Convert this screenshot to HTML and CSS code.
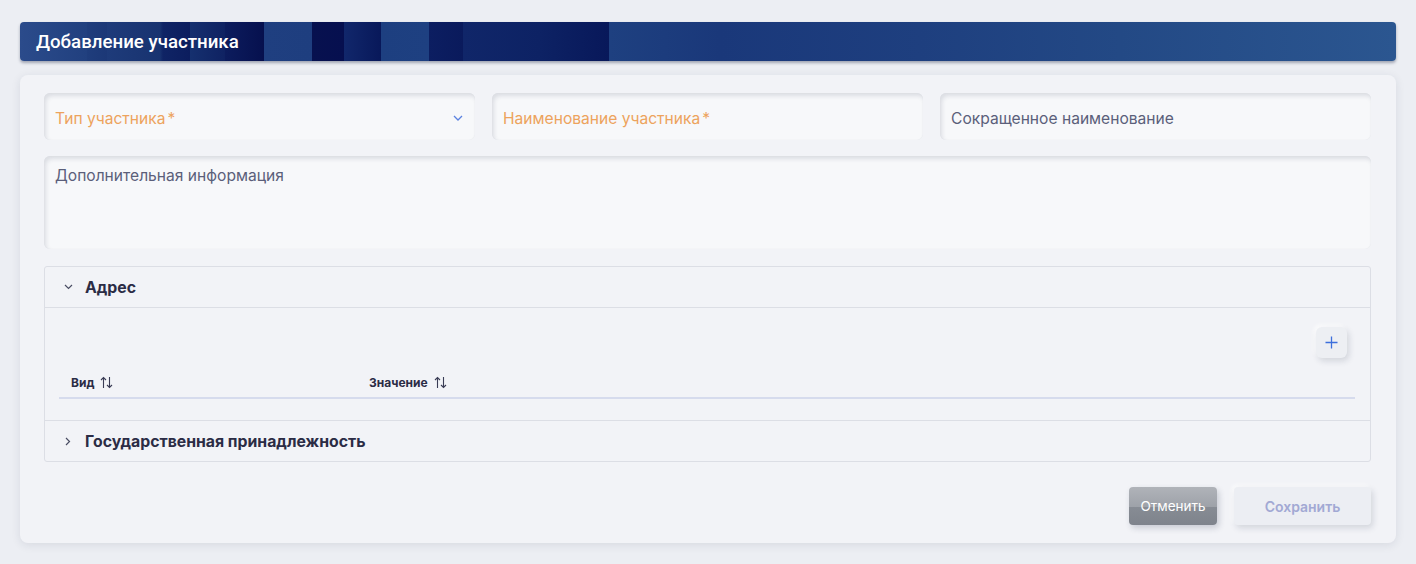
FILE: index.html
```html
<!DOCTYPE html>
<html lang="ru">
<head>
<meta charset="utf-8">
<link rel="stylesheet" href="styles.css">
</head>
<body>
<div class="page">
  <div class="titlebar"><h1>Добавление участника</h1></div>
  <div class="panel">
    <div class="row3">
      <div class="field select">
        <span class="ph req">Тип участника<span class="star">*</span></span>
        <svg class="dd" width="10" height="6" viewBox="0 0 10 6"><path d="M1 1l4 4 4-4" fill="none" stroke="#5b82e0" stroke-width="1.3"/></svg>
      </div>
      <div class="field"><span class="ph req">Наименование участника<span class="star">*</span></span></div>
      <div class="field"><span class="ph">Сокращенное наименование</span></div>
    </div>
    <div class="field area"><span class="ph">Дополнительная информация</span></div>
    <div class="accordion">
      <div class="acc-head">
        <span class="chev-box"><svg width="9" height="6" viewBox="0 0 9 6"><path d="M1 1l3.5 3.5L8 1" fill="none" stroke="#4a4d63" stroke-width="1.2"/></svg></span>
        <span>Адрес</span>
      </div>
      <div class="acc-body">
        <div class="toolbar">
          <button class="plus"><svg width="13" height="13" viewBox="0 0 13 13"><path d="M6.5 0.5v12M0.5 6.5h12" stroke="#3d6fdc" stroke-width="1.3"/></svg></button>
        </div>
        <div class="thead">
          <div class="th c1">Вид <svg class="sort" width="13" height="13" viewBox="0 0 13 13"><path d="M3.5 12V1.5M1 4l2.5-2.5L6 4M9.5 1v10.5M7 9l2.5 2.5L12 9" fill="none" stroke="#3a3c55" stroke-width="1.1"/></svg></div>
          <div class="th c2">Значение <svg class="sort" width="13" height="13" viewBox="0 0 13 13"><path d="M3.5 12V1.5M1 4l2.5-2.5L6 4M9.5 1v10.5M7 9l2.5 2.5L12 9" fill="none" stroke="#3a3c55" stroke-width="1.1"/></svg></div>
        </div>
      </div>
      <div class="acc-head last">
        <span class="chev-box"><svg width="6" height="9" viewBox="0 0 6 9"><path d="M1 1l3.5 3.5L1 8" fill="none" stroke="#4a4d63" stroke-width="1.2"/></svg></span>
        <span>Государственная принадлежность</span>
      </div>
    </div>
    <div class="actions">
      <button class="btn cancel">Отменить</button>
      <button class="btn save">Сохранить</button>
    </div>
  </div>
</div>
</body>
</html>
```

FILE: styles.css
```css
* { box-sizing: border-box; }
html, body { margin: 0; padding: 0; }
body {
  background: #eceef3;
  font-family: Inter, "Noto Sans", sans-serif;
  width: 1416px;
  height: 564px;
  overflow: hidden;
}
.page {
  padding: 22px 20px 0 20px;
}
.titlebar {
  height: 39px;
  border-radius: 4px;
  box-shadow: 0 2px 3px rgba(20, 30, 60, 0.35);
  background: linear-gradient(90deg,
    #2b4b8b 0px, #21407f 67px,
    #1f3d7c 67px, #1c3877 87px,
    #1e3b7a 87px, #183370 140px,
    #0f2465 143px, #0c1d5e 170px,
    #15306f 170px, #0f2262 205px,
    #0c1c5d 205px, #06104e 244px,
    #1f3f80 244px, #1e3e7f 292px,
    #07114f 292px, #060f4f 324px,
    #11276b 324px, #08185a 361px,
    #1d3f80 361px, #1e4081 409px,
    #0c1e61 409px, #0a1a5c 443px,
    #102669 443px, #0d2264 520px, #08185a 589px,
    #1e4080 589px, #1a387a 700px,
    #1e3f7f 900px, #234985 1100px, #2b5690 1376px);
  display: flex;
  align-items: center;
  padding-left: 16px;
}
.titlebar h1 {
  margin: 0;
  font-family: Roboto, "Liberation Sans", sans-serif;
  font-weight: 500;
  font-size: 18.7px;
  color: #ffffff;
}
.panel {
  margin-top: 14px;
  background: #f2f3f7;
  border-radius: 8px;
  box-shadow: 0 2px 10px rgba(30, 40, 70, 0.10);
  padding: 18px 25px 18px 24px;
  display: flex;
  flex-direction: column;
  gap: 16px;
  height: 468px;
}
.row3 {
  display: grid;
  grid-template-columns: 1fr 1fr 1fr;
  gap: 17px;
}
.field {
  height: 47px;
  background: #f7f8fa;
  border-radius: 6px;
  box-shadow: inset 2px 3px 4px rgba(40, 50, 80, 0.13), inset 0 0 1px rgba(40,50,80,0.08);
  display: flex;
  align-items: center;
  padding: 3px 12px 0 11px;
  position: relative;
}
.ph {
  font-size: 15.6px;
  color: #5b5f7a;
}
.ph.req { color: #eda35d; }
.star { margin-left: 2px; }
.select { justify-content: space-between; padding-right: 12px; }
.dd { margin-top: -1px; }
.area {
  height: 94px;
  align-items: flex-start;
  padding-top: 10px;
}
.accordion {
  margin-top: 1px;
  border: 1px solid #dcdee5;
  border-radius: 3px;
  display: flex;
  flex-direction: column;
}
.acc-head {
  height: 41px;
  display: flex;
  align-items: center;
  padding-left: 14px;
  font-size: 15.8px;
  font-weight: 700;
  color: #2b2c45;
  border-bottom: 1px solid #dcdee5;
}
.chev-box {
  width: 18px;
  margin-right: 8px;
  display: flex;
  justify-content: center;
  align-items: center;
}
.acc-head.last { border-bottom: none; height: 40px; }
.acc-body {
  padding: 19px 15px 23px 14px;
  border-bottom: 1px solid #dcdee5;
  height: 113px;
}
.toolbar {
  display: flex;
  justify-content: flex-end;
  padding-right: 8px;
}
.plus {
  width: 31px;
  height: 31px;
  border: none;
  border-radius: 6px;
  background: #edeff3;
  box-shadow: 2px 3px 6px rgba(30, 40, 70, 0.15), -2px -2px 4px rgba(255,255,255,0.8);
  display: flex;
  align-items: center;
  justify-content: center;
  padding: 0;
}
.thead {
  margin-top: 14px;
  display: flex;
  height: 27px;
  align-items: center;
  border-bottom: 2px solid #d6dbed;
  padding-bottom: 5px;
}
.th {
  font-size: 12px;
  font-weight: 700;
  color: #2b2c45;
  padding-left: 12px;
  display: flex;
  align-items: center;
}
.th.c1 { width: 298px; }
.sort {
  margin-left: 6px;
}
.actions {
  margin-top: 9px;
  display: flex;
  justify-content: flex-end;
  gap: 17px;
}
.btn {
  height: 38px;
  border: none;
  border-radius: 4px;
  font-family: Inter, "Noto Sans", sans-serif;
  font-size: 13.5px;
}
.cancel {
  width: 88px;
  color: #ffffff;
  background: linear-gradient(180deg, #b0b3b9 0%, #9ea2a9 52%, #878c94 52%, #7e838c 100%);
  box-shadow: 2px 3px 6px rgba(30, 40, 70, 0.2);
}
.save {
  width: 137px;
  color: #a2a9d4;
  font-weight: 600;
  font-size: 14px;
  background: #eceef3;
  box-shadow: 2px 3px 6px rgba(30, 40, 70, 0.15), -2px -2px 4px rgba(255,255,255,0.7);
}
```
